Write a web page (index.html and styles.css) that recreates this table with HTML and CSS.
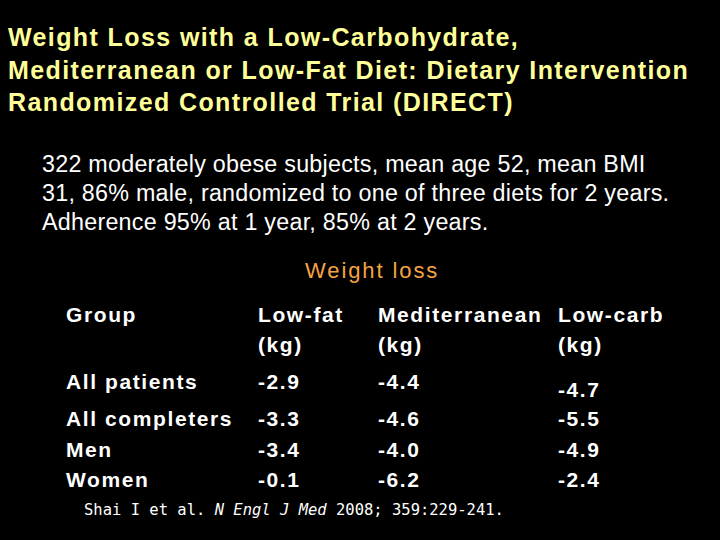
FILE: index.html
```html
<!DOCTYPE html>
<html>
<head>
<meta charset="utf-8">
<link rel="stylesheet" href="styles.css">
</head>
<body>
<div class="slide">
  <h1 class="title">Weight Loss with a Low-Carbohydrate,<br>Mediterranean or Low-Fat Diet: Dietary Intervention<br>Randomized Controlled Trial (DIRECT)</h1>
  <p class="intro">322 moderately obese subjects, mean age 52, mean BMI<br>31, 86% male, randomized to one of three diets for 2 years.<br>Adherence 95% at 1 year, 85% at 2 years.</p>
  <div class="caption">Weight loss</div>
  <div class="table">
    <div class="row head">
      <div class="c1">Group</div>
      <div class="c2">Low-fat<br>(kg)</div>
      <div class="c3">Mediterranean<br>(kg)</div>
      <div class="c4">Low-carb<br>(kg)</div>
    </div>
    <div class="row gap">
      <div class="c1">All patients</div>
      <div class="c2">-2.9</div>
      <div class="c3">-4.4</div>
      <div class="c4 low">-4.7</div>
    </div>
    <div class="row gap">
      <div class="c1">All completers</div>
      <div class="c2">-3.3</div>
      <div class="c3">-4.6</div>
      <div class="c4">-5.5</div>
    </div>
    <div class="row small-gap">
      <div class="c1">Men</div>
      <div class="c2">-3.4</div>
      <div class="c3">-4.0</div>
      <div class="c4">-4.9</div>
    </div>
    <div class="row">
      <div class="c1">Women</div>
      <div class="c2">-0.1</div>
      <div class="c3">-6.2</div>
      <div class="c4">-2.4</div>
    </div>
  </div>
  <div class="cite">Shai I et al. <i>N Engl J Med</i> 2008; 359:229-241.</div>
</div>
</body>
</html>
```
FILE: styles.css
```css
html, body {
  margin: 0;
  padding: 0;
  background: #000;
}
.slide {
  width: 720px;
  height: 540px;
  background: #000;
  color: #fff;
  font-family: "Liberation Sans", Arial, sans-serif;
  overflow: hidden;
}
.title {
  margin: 0;
  padding: 21px 0 0 8px;
  font-size: 25px;
  line-height: 32.5px;
  letter-spacing: 1.4px;
  font-weight: bold;
  color: #ffff99;
  white-space: nowrap;
}
.intro {
  margin: 0;
  padding: 31px 0 0 42px;
  font-size: 23.3px;
  line-height: 29px;
  letter-spacing: 0.25px;
  white-space: nowrap;
}
.caption {
  padding: 19px 0 0 305px;
  font-size: 22px;
  line-height: 30px;
  letter-spacing: 1.9px;
  color: #f4a444;
}
.table {
  padding: 14px 0 0 66px;
  font-size: 21px;
  font-weight: bold;
  line-height: 30px;
  letter-spacing: 1.6px;
  white-space: nowrap;
}
.row {
  display: grid;
  grid-template-columns: 192px 120px 180px auto;
}
.row.gap {
  margin-top: 7px;
}
.row.small-gap {
  margin-top: 1px;
}
.c4.low {
  padding-top: 8px;
  margin-bottom: -8px;
}
.cite {
  padding: 0 0 0 84px;
  margin-top: 5px;
  font-family: "DejaVu Sans Mono", monospace;
  font-size: 15.5px;
  line-height: 20px;
}
```
